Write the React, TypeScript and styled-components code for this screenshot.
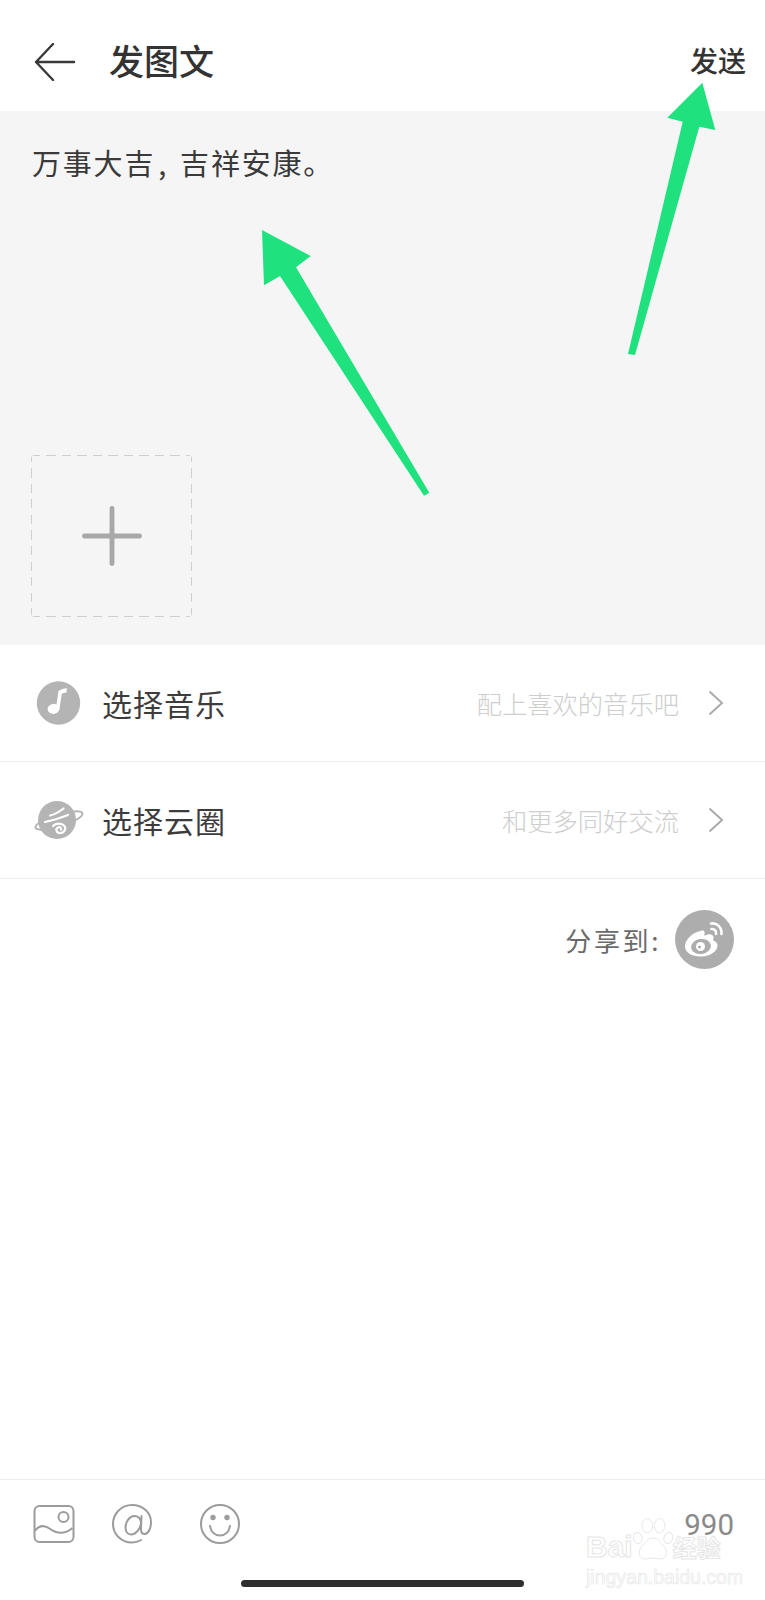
import styled, { createGlobalStyle } from "styled-components";

const GlobalStyle = createGlobalStyle`
  html, body {
    margin: 0;
    padding: 0;
    background: #fff;
  }
  * {
    box-sizing: border-box;
  }
`;

const Page = styled.div`
  position: relative;
  width: 765px;
  height: 1600px;
  display: flex;
  flex-direction: column;
  overflow: hidden;
  background: #fff;
  color: #333;
  font-family: "Noto Sans CJK SC", "Noto Sans", sans-serif;
`;

const Header = styled.header`
  height: 111px;
  flex: none;
  display: flex;
  align-items: center;
  padding: 12px 19px 0 34px;
`;

const BackIcon = styled.svg`
  width: 42px;
  height: 38px;
  flex: none;
`;

const Title = styled.h1`
  margin: -4px 0 0 33px;
  font-size: 35px;
  font-weight: 500;
  line-height: 40px;
  flex: 1;
`;

const SendButton = styled.span`
  font-size: 28px;
  font-weight: 500;
  line-height: 34px;
  margin-top: -4px;
`;

const Composer = styled.section`
  height: 534px;
  flex: none;
  background: #f5f5f5;
  padding: 30px 32px 28px 31px;
  display: flex;
  flex-direction: column;
  justify-content: space-between;
`;

const Draft = styled.p`
  margin: 0 0 0 1px;
  font-size: 29px;
  line-height: 42px;
  letter-spacing: 1.8px;
  color: #3a3a3a;
`;

const Comma = styled.span`
  margin: 0 12px 0 3px;
`;

const AddImage = styled.div`
  width: 161px;
  height: 162px;
  display: flex;
  align-items: center;
  justify-content: center;
  border-radius: 4px;
  background-image:
    repeating-linear-gradient(90deg, #cfcfcf 0 9px, transparent 9px 15.5px),
    repeating-linear-gradient(90deg, #cfcfcf 0 9px, transparent 9px 15.5px),
    repeating-linear-gradient(0deg, #cfcfcf 0 9px, transparent 9px 15.5px),
    repeating-linear-gradient(0deg, #cfcfcf 0 9px, transparent 9px 15.5px);
  background-size: 100% 1px, 100% 1px, 1px 100%, 1px 100%;
  background-position: 0 0, 0 100%, 0 0, 100% 0;
  background-repeat: no-repeat;
`;

const PlusIcon = styled.svg`
  width: 60px;
  height: 60px;
`;

const Row = styled.div`
  height: 117px;
  flex: none;
  display: flex;
  align-items: center;
  padding: 0 41px 0 34px;
  border-bottom: 1px solid #ececec;
`;

const RowIcon = styled.svg`
  width: 50px;
  height: 50px;
  flex: none;
`;

const RowLabel = styled.span`
  margin-left: 18px;
  font-size: 30px;
  line-height: 40px;
  letter-spacing: 1px;
  color: #3c3c3c;
  flex: 1;
`;

const RowHint = styled.span`
  font-size: 25.3px;
  line-height: 34px;
  color: #cecece;
  font-weight: 300;
`;

const Chevron = styled.svg`
  width: 16px;
  height: 26px;
  margin-left: 29px;
  flex: none;
`;

const ShareRow = styled.div`
  flex: none;
  display: flex;
  justify-content: flex-end;
  align-items: center;
  gap: 14px;
  padding: 31px 31px 0 0;
`;

const ShareLabel = styled.span`
  font-size: 26px;
  line-height: 34px;
  letter-spacing: 2.6px;
  color: #6a6a6a;
`;

const WeiboIcon = styled.svg`
  width: 59px;
  height: 59px;
  flex: none;
`;

const Spacer = styled.div`
  flex: 1;
`;

const Toolbar = styled.footer`
  height: 121px;
  flex: none;
  border-top: 1px solid #ececec;
  display: flex;
  flex-direction: column;
`;

const ToolRow = styled.div`
  display: flex;
  align-items: center;
  padding: 23px 31px 0 33px;
`;

const ToolIcon = styled.svg<{ $gap: number }>`
  width: 42px;
  height: 42px;
  flex: none;
  margin-right: ${(p) => p.$gap}px;
`;

const Counter = styled.span`
  margin-left: auto;
  font-family: Roboto, "Noto Sans", sans-serif;
  font-size: 29.5px;
  line-height: 34px;
  color: #8a8a8a;
  margin-top: 2px;
`;

const HomeBar = styled.div`
  width: 283px;
  height: 7px;
  border-radius: 4px;
  background: #2f2f2f;
  margin: 35px auto 0;
`;

const Annotation = styled.svg`
  position: absolute;
  inset: 0;
  width: 765px;
  height: 1600px;
  pointer-events: none;
`;

const Watermark = styled.div`
  position: absolute;
  left: 586px;
  top: 1516px;
  width: 140px;
  color: #fff;
  font-family: "Liberation Sans", sans-serif;
  -webkit-text-stroke: 1px #e6e6e6;
  pointer-events: none;
`;

const MarkTop = styled.div`
  display: flex;
  align-items: flex-end;
`;

const MarkWord = styled.span`
  font-size: 30px;
  font-weight: 700;
  line-height: 30px;
`;

const MarkCjk = styled.span`
  font-family: "Noto Sans CJK SC", sans-serif;
  font-size: 24px;
  font-weight: 700;
  line-height: 30px;
`;

const MarkPaw = styled.svg`
  width: 40px;
  height: 46px;
  flex: none;
`;

const MarkUrl = styled.div`
  font-size: 19.5px;
  line-height: 22px;
  margin-top: 4px;
  white-space: nowrap;
  -webkit-text-stroke: 0.6px #e8e8e8;
  color: #fbfbfb;
`;

const MusicIcon = () => (
  <RowIcon viewBox="0 0 50 50">
    <circle cx="24.5" cy="25" r="21.7" fill="#b4b4b4" />
    <path
      d="M24.500 13c2.500-1.800 5-2.600 8.500-2.800l-.6 4.400c-1.900.1-3.400.6-4.700 1.400L25.500 31a6 5 -8 1 1-3-4.600z"
      fill="#fff"
    />
  </RowIcon>
);

const PlanetIcon = () => (
  <RowIcon viewBox="0 0 50 50">
    <ellipse
      cx="25"
      cy="25.500"
      rx="24.500"
      ry="6"
      transform="rotate(-17 25 25.500)"
      fill="none"
      stroke="#b4b4b4"
      strokeWidth="2"
    />
    <circle cx="23" cy="25" r="19" fill="#b4b4b4" />
    <path
      d="M16 20.500c5-1 9-3.500 13.500-7M11 27c7-1.500 15-4 23-7M19 31c3-3.500 9-3 11.500 0 2 3-.5 7-4.500 7-3.500 0-5-4-2-5.500 2-1 3.500.5 3 2"
      fill="none"
      stroke="#fff"
      strokeWidth="2.200"
      strokeLinecap="round"
    />
  </RowIcon>
);

const ArrowRight = () => (
  <Chevron viewBox="0 0 16 26">
    <path d="M1.500 1.500 14 13 1.500 24.500" fill="none" stroke="#ababab" strokeWidth="2" />
  </Chevron>
);

export default function App() {
  return (
    <Page>
      <GlobalStyle />
      <Header>
        <BackIcon viewBox="0 0 42 38">
          <path
            d="M19 1 2 19l17 18M2 19h38"
            fill="none"
            stroke="#3a3a3a"
            strokeWidth="2.400"
            strokeLinecap="round"
            strokeLinejoin="round"
          />
        </BackIcon>
        <Title>发图文</Title>
        <SendButton>发送</SendButton>
      </Header>

      <Composer>
        <Draft>
          万事大吉<Comma>,</Comma>吉祥安康。
        </Draft>
        <AddImage>
          <PlusIcon viewBox="0 0 62 62">
            <path
              d="M31 2.500v57M2.500 31h57"
              fill="none"
              stroke="#a8a8a8"
              strokeWidth="5"
              strokeLinecap="round"
            />
          </PlusIcon>
        </AddImage>
      </Composer>

      <Row>
        <MusicIcon />
        <RowLabel>选择音乐</RowLabel>
        <RowHint>配上喜欢的音乐吧</RowHint>
        <ArrowRight />
      </Row>
      <Row>
        <PlanetIcon />
        <RowLabel>选择云圈</RowLabel>
        <RowHint>和更多同好交流</RowHint>
        <ArrowRight />
      </Row>

      <ShareRow>
        <ShareLabel>分享到:</ShareLabel>
        <WeiboIcon viewBox="0 0 59 59">
          <circle cx="29.500" cy="29.500" r="29.500" fill="#adadad" />
          <path
            d="M25.500 21c-7 1-15 8-15.500 14.500C9.500 43 18 47 27 46.500c8-.5 15.500-5 15.500-11 0-3-2.500-4.500-4.500-5 1-2.500.8-4.500-.8-5.500-2-1.300-5-.6-8 .8.800-2.800.6-4.500-.7-5-.9-.4-2-.1-3 .2z"
            fill="#fff"
          />
          <ellipse cx="26" cy="36.500" rx="10" ry="7.500" fill="#adadad" transform="rotate(-8 26 36.500)" />
          <circle cx="25.500" cy="36.500" r="4.500" fill="#fff" />
          <circle cx="24.500" cy="37" r="1.500" fill="#adadad" />
          <path
            d="M36 13.500c6-1 11 4 10.500 10.500M36.500 19c3-.5 5 2 4.500 5"
            fill="none"
            stroke="#fff"
            strokeWidth="2.600"
            strokeLinecap="round"
          />
        </WeiboIcon>
      </ShareRow>

      <Spacer />

      <Toolbar>
        <ToolRow>
          <ToolIcon $gap={36} viewBox="0 0 42 42">
            <rect x="1.500" y="3" width="39" height="36" rx="5" fill="none" stroke="#9c9c9c" strokeWidth="2" />
            <circle cx="30.500" cy="14" r="5" fill="none" stroke="#9c9c9c" strokeWidth="2" />
            <path
              d="M1.500 28c5-6 10-6 15-2.500 6 4.500 14 7 23-.5"
              fill="none"
              stroke="#9c9c9c"
              strokeWidth="2"
            />
          </ToolIcon>
          <ToolIcon $gap={46} viewBox="0 0 42 42">
            <path
              d="M30 37c-3 1.800-6 2.500-9 2.500C10 39.500 2 31 2 21S10 2 21 2s19 7.500 19 17c0 6-2.500 12-6.500 12-2.500 0-3.500-2-3.500-5l.5-13m-.5 6c-.8-4-3.500-6-6.500-6-5 0-9 6-9 11.500 0 4 2 7 5.500 7 5 0 10-6 10-12.500z"
              fill="none"
              stroke="#9c9c9c"
              strokeWidth="2"
              strokeLinecap="round"
            />
          </ToolIcon>
          <ToolIcon $gap={0} viewBox="0 0 42 42">
            <circle cx="21" cy="21" r="19" fill="none" stroke="#9c9c9c" strokeWidth="2" />
            <circle cx="14" cy="14.500" r="2.700" fill="#9c9c9c" />
            <circle cx="28" cy="14.500" r="2.700" fill="#9c9c9c" />
            <path
              d="M11 23c1 6 5 9.500 10 9.500S30 29 31 23"
              fill="none"
              stroke="#9c9c9c"
              strokeWidth="2"
              strokeLinecap="round"
            />
          </ToolIcon>
          <Counter>990</Counter>
        </ToolRow>
        <HomeBar />
      </Toolbar>

      <Annotation viewBox="0 0 765 1600">
        <polygon
          points="262,230 310.700,256 296,267.300 429.300,492.700 424,495.700 280,276 264,285.300"
          fill="#1fe27f"
        />
        <polygon
          points="702.300,82.700 715.300,130 699.300,126.700 635,355 628,354 682.700,121.700 667.300,117.700"
          fill="#1fe27f"
        />
      </Annotation>

      <Watermark>
        <MarkTop>
          <MarkWord>Bai</MarkWord>
          <MarkPaw viewBox="0 0 42 46">
            <g fill="#fff" stroke="#e6e6e6" strokeWidth="1">
              <ellipse cx="5" cy="22" rx="4.500" ry="6" transform="rotate(-15 5 22)" />
              <ellipse cx="15" cy="9" rx="5.500" ry="7.500" />
              <ellipse cx="28" cy="9" rx="5.500" ry="7.500" />
              <ellipse cx="37" cy="22" rx="4.500" ry="6" transform="rotate(15 37 22)" />
              <path d="M21 22c-6 0-8 5-12 9-4 5-3 13 4 13 3 0 5-1 8-1s5 1 8 1c7 0 8-8 4-13-4-4-6-9-12-9z" />
            </g>
          </MarkPaw>
          <MarkCjk>经验</MarkCjk>
        </MarkTop>
        <MarkUrl>jingyan.baidu.com</MarkUrl>
      </Watermark>
    </Page>
  );
}
